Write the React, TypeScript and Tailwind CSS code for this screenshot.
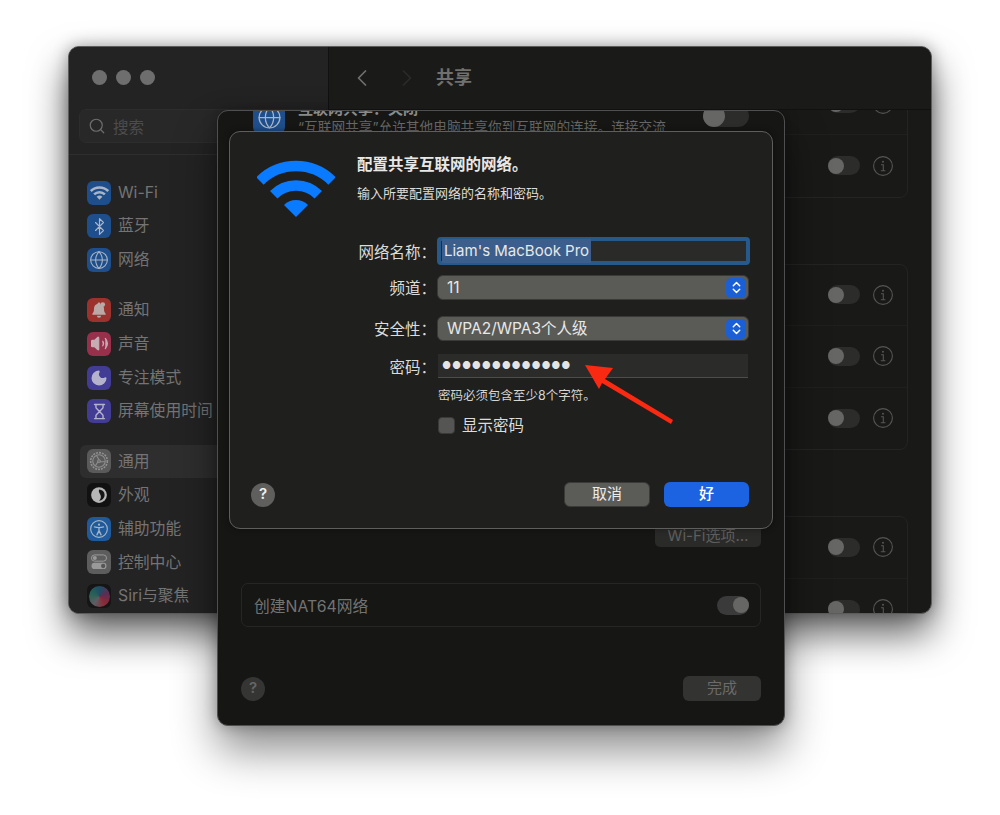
import { ReactNode } from "react";
import { Bluetooth, ChevronLeft, ChevronRight, Globe, Hourglass, Moon, Search, Volume2 } from "lucide-react";

const WifiMark = ({ className }: { className: string }) => (
  <svg viewBox="0 0 78 58" className={className} fill="none" stroke="currentColor">
    <path d="M2.94 20.94A51 51 0 0 1 75.06 20.94" strokeWidth="10.5" />
    <path d="M16.73 34.73A31.5 31.5 0 0 1 61.27 34.73" strokeWidth="10.5" />
    <path d="M39 57L27 45A17 17 0 0 1 51 45Z" fill="currentColor" stroke="none" />
  </svg>
);

const GearIcon = () => (
  <svg viewBox="0 0 24 24" className="h-[20px] w-[20px]" fill="none" stroke="#8f8f8f" strokeWidth="1.3">
    <circle cx="12" cy="12" r="10" strokeDasharray="2.4 1.2" strokeWidth="2" />
    <circle cx="12" cy="12" r="7.5" />
    <circle cx="12" cy="12" r="1.6" />
    <path d="M12 10.4L9 5.5M13.4 12.8L19 13M10.7 13L7.6 18" />
  </svg>
);

const AppearanceIcon = () => (
  <svg viewBox="0 0 24 24" className="h-[18px] w-[18px]">
    <circle cx="12" cy="12" r="10.5" fill="#b5b5b5" />
    <path d="M12 4.5a7.5 7.5 0 0 1 0 15c2.5-2 3-5 2-7.5s-3-4-2-7.5Z" fill="#151515" />
  </svg>
);

const AccessibilityIcon = () => (
  <svg viewBox="0 0 24 24" className="h-[20px] w-[20px]" fill="none" stroke="#a8b4c2" strokeWidth="1.4">
    <circle cx="12" cy="12" r="10" />
    <circle cx="12" cy="6.8" r="1.3" fill="#a8b4c2" stroke="none" />
    <path d="M6.5 9.5c3.5 1 7.5 1 11 0M12 10.5v3.5M12 14l-2.5 5M12 14l2.5 5" strokeLinecap="round" strokeWidth="1.6" />
  </svg>
);

const ControlIcon = () => (
  <svg viewBox="0 0 24 24" className="h-[20px] w-[20px]" fill="none">
    <rect x="3" y="3.5" width="18" height="7.5" rx="3.75" stroke="#999" strokeWidth="1.2" />
    <circle cx="7" cy="7.2" r="2.4" fill="#999" />
    <rect x="3" y="13" width="18" height="7.5" rx="3.75" fill="#999" />
    <circle cx="17" cy="16.8" r="2.6" fill="#555" />
  </svg>
);

const BellIcon = () => (
  <svg viewBox="0 0 24 24" className="h-[20px] w-[20px]" fill="#b9aaa8">
    <path d="M12 3c-1 0-1.6.7-1.7 1.5C7.5 5.3 6 7.6 6 10.5c0 3-.6 4.6-2 6v1.2h16v-1.2c-1.4-1.4-2-3-2-6 0-1-.2-2-.6-2.8C15 7.3 13.8 5.5 13.8 4.8 13.7 3.7 13 3 12 3Z" />
    <circle cx="16.5" cy="5.5" r="2.8" />
    <path d="M9.5 18.8a2.5 2.5 0 0 0 5 0Z" />
  </svg>
);

type SideItem = { label: string; color: string; icon: ReactNode; active?: boolean };

const sideGroups: SideItem[][] = [
  [
    { label: "Wi-Fi", color: "bg-[#1e4f8c]", icon: <WifiMark className="h-[14px] w-[19px] text-[#a9b5c4]" /> },
    { label: "蓝牙", color: "bg-[#1e4f8c]", icon: <Bluetooth size={19} color="#a9b5c4" strokeWidth={1.5} /> },
    { label: "网络", color: "bg-[#1e4f8c]", icon: <Globe size={20} color="#a9b5c4" strokeWidth={1.3} /> },
  ],
  [
    { label: "通知", color: "bg-[#9c322d]", icon: <BellIcon /> },
    { label: "声音", color: "bg-[#97304a]", icon: <Volume2 size={19} color="#c4adb3" fill="#c4adb3" strokeWidth={1.5} /> },
    { label: "专注模式", color: "bg-[#423c94]", icon: <Moon size={18} color="#b4b2cc" fill="#b4b2cc" /> },
    { label: "屏幕使用时间", color: "bg-[#423c94]", icon: <Hourglass size={17} color="#b4b2cc" strokeWidth={2} /> },
  ],
  [
    { label: "通用", color: "bg-[#5a5a5a]", icon: <GearIcon />, active: true },
    { label: "外观", color: "bg-[#111111]", icon: <AppearanceIcon /> },
    { label: "辅助功能", color: "bg-[#1f5a9c]", icon: <AccessibilityIcon /> },
    { label: "控制中心", color: "bg-[#5d5d5d]", icon: <ControlIcon /> },
    {
      label: "Siri与聚焦",
      color: "bg-[#151515]",
      icon: (
        <span className="h-[21px] w-[21px] rounded-full bg-[conic-gradient(#1e4d66,#5e2c52,#8a2a36,#5d5d62,#2a6155,#1e4d66)]" />
      ),
    },
  ],
];

const InfoIcon = () => (
  <svg viewBox="0 0 20 20" className="h-[20px] w-[20px]" fill="none" stroke="#555553" strokeWidth="1.1">
    <circle cx="10" cy="10" r="9.4" />
    <circle cx="10" cy="5.8" r="1" fill="#555553" stroke="none" />
    <path d="M8 8.8h2.3v6M7.8 14.8h4.6" />
  </svg>
);

const Toggle = ({ on = false, small = true }: { on?: boolean; small?: boolean }) => (
  <span
    className={`flex items-center rounded-full ${small ? "h-[19px] w-[32px]" : "h-[22px] w-[46px]"} ${on ? "justify-end bg-[#3a3a3a]" : "bg-[#2c2c2b]"}`}
  >
    <span className={`rounded-full bg-[#666665] ${small ? "h-[16px] w-[16px]" : "h-[22px] w-[22px]"}`} />
  </span>
);

const SettingRow = ({ last = false }: { last?: boolean }) => (
  <div className={`flex h-[61.5px] items-center justify-end gap-[13px] pr-[14px] ${last ? "" : "border-b border-[#1f1f1e]"}`}>
    <Toggle />
    <InfoIcon />
  </div>
);

const Stepper = () => (
  <span className="flex h-[20px] w-[20px] items-center justify-center rounded-[5px] bg-[#1b5fd6]">
    <svg viewBox="0 0 12 16" className="h-[15px] w-[11px]" fill="none" stroke="#fff" strokeWidth="1.6" strokeLinecap="round" strokeLinejoin="round">
      <path d="M2.5 6L6 2.5L9.5 6M2.5 10L6 13.5L9.5 10" />
    </svg>
  </span>
);

const SelectField = ({ value }: { value: string }) => (
  <div className="flex h-[25px] w-[312px] items-center justify-between rounded-[6px] border border-[#3a3a38] bg-[#5a5a56] pl-[9px] pr-[2px] text-[15.5px] text-[#e8e8e6]">
    <span className="pt-[1px]">{value}</span>
    <Stepper />
  </div>
);

const FormLabel = ({ children }: { children: string }) => (
  <span className="w-[79px] whitespace-nowrap pt-[3px] text-right text-[15.5px] text-[#dcdcda]">{children}</span>
);

const HelpButton = ({ className }: { className: string }) => (
  <span className={`flex h-[24px] w-[24px] items-center justify-center rounded-full text-[15px] font-semibold ${className}`}>?</span>
);

const BackWindow = () => (
  <div className="absolute left-[68px] top-[46px] flex h-[568px] w-[864px] overflow-hidden rounded-[11px] border border-[#5c5c5c] bg-[#191918] shadow-[0_20px_38px_rgba(0,0,0,0.62),0_0_16px_rgba(0,0,0,0.3)]">
    <aside className="flex w-[260px] shrink-0 flex-col border-r border-[#111111] bg-[#232323]">
      <div className="flex gap-[9px] pl-[23px] pt-[23px]">
        <span className="h-[15px] w-[15px] rounded-full bg-[#6e6e6e]" />
        <span className="h-[15px] w-[15px] rounded-full bg-[#6e6e6e]" />
        <span className="h-[15px] w-[15px] rounded-full bg-[#6e6e6e]" />
      </div>
      <div className="mx-[10px] mt-[24px] flex h-[34px] items-center gap-[7px] rounded-[7px] border border-[#2d2d2d] bg-[#282828] pl-[8px] text-[15.5px] text-[#4c4c4c]">
        <Search size={18} color="#6e6e6e" strokeWidth={1.6} />
        <span className="pt-[3px]">搜索</span>
      </div>
      <div className="mt-[11px] border-t border-[#2e2e2e]" />
      {sideGroups.map((group, i) => (
        <div key={i} className={i === 0 ? "mt-[21px]" : "mt-[16.5px]"}>
          {group.map((item) => (
            <div
              key={item.label}
              className={`mx-[11px] flex h-[33.7px] items-center gap-[7px] whitespace-nowrap rounded-[6px] pl-[7px] text-[15.8px] text-[#747474] ${item.active ? "bg-[#2e2e2e]" : ""}`}
            >
              <span className={`flex h-[24px] w-[24px] shrink-0 items-center justify-center overflow-hidden rounded-[6px] ${item.color}`}>
                {item.icon}
              </span>
              <span>{item.label}</span>
            </div>
          ))}
        </div>
      ))}
    </aside>
    <div className="flex min-w-0 flex-1 flex-col">
      <header className="z-10 flex h-[63px] shrink-0 items-center border-b border-[#111111] bg-[#1a1a19] pl-[19px] text-[#70706e]">
        <ChevronLeft size={28} strokeWidth={1.5} />
        <ChevronRight size={28} strokeWidth={1.5} color="#2b2b2a" className="ml-[17px]" />
        <span className="-mt-[2px] ml-[15px] text-[18px] font-bold">共享</span>
      </header>
      <div className="ml-[24px] mr-[23px] -mt-[37.5px] flex flex-col">
        <div className="rounded-[8px] border border-[#242423]">
          <SettingRow />
          <SettingRow last />
        </div>
        <div className="mt-[66px] rounded-[8px] border border-[#242423]">
          <SettingRow />
          <SettingRow />
          <SettingRow last />
        </div>
        <div className="mt-[66px] rounded-[8px] border border-[#242423]">
          <SettingRow />
          <SettingRow last />
        </div>
      </div>
    </div>
  </div>
);

const SheetWindow = () => (
  <div className="absolute left-[217px] top-[110px] flex h-[616px] w-[568px] flex-col overflow-hidden rounded-[11px] border border-[#4f4f4f] bg-[#161615] shadow-[0_24px_44px_rgba(0,0,0,0.45),0_0_14px_rgba(0,0,0,0.28)]">
    <div className="-mt-[10px] flex h-[33px] items-center gap-[13px] pl-[35px] pr-[35px]">
      <span className="flex h-[32px] w-[32px] shrink-0 items-center justify-center rounded-[7px] bg-[#1e4f8c]">
        <Globe size={25} color="#a9b5c4" strokeWidth={1.2} />
      </span>
      <div className="min-w-0 flex-1 whitespace-nowrap leading-[19px]">
        <div className="text-[15px] font-semibold text-[#8a8a88]">互联网共享：关闭</div>
        <div className="text-[13.7px] text-[#666664]">“互联网共享”允许其他电脑共享你到互联网的连接。连接交流</div>
      </div>
      <span className="-mt-[3px]">
        <Toggle small={false} />
      </span>
    </div>
    <div className="mt-[391px] flex justify-end pr-[23px]">
      <span className="flex h-[22px] w-[106px] items-center justify-center rounded-[5px] bg-[#2a2a29] pt-[1px] text-[15px] text-[#5f5f5d]">
        Wi-Fi选项…
      </span>
    </div>
    <div className="mx-[23px] mt-[36px] flex h-[44px] items-center justify-between rounded-[7px] border border-[#262625] pl-[12px] pr-[11px] text-[15.8px] text-[#737371]">
      <span className="pt-[3px]">创建NAT64网络</span>
      <Toggle on />
    </div>
    <div className="mt-auto flex items-center justify-between pb-[24px] pl-[23px] pr-[23px]">
      <HelpButton className="bg-[#353534] text-[#666664]" />
      <span className="flex h-[25px] w-[78px] items-center justify-center rounded-[6px] bg-[#333332] text-[15px] text-[#6b6b69]">完成</span>
    </div>
  </div>
);

const ConfigDialog = () => (
  <div className="absolute left-[229px] top-[131px] flex h-[398px] w-[544px] flex-col rounded-[11px] border border-[#5e5e5c] bg-[#1f1f1d] shadow-[0_0_6px_rgba(0,0,0,0.4)]">
    <div className="flex pl-[27px] pt-[28px]">
      <WifiMark className="h-[58px] w-[78px] text-[#0a7aff]" />
      <div className="ml-[22px]">
        <h1 className="-mt-[6px] text-[15.5px] font-bold leading-[22px] text-[#e8e8e6]">配置共享互联网的网络。</h1>
        <p className="mt-[7px] text-[13px] leading-[20px] text-[#dcdcda]">输入所要配置网络的名称和密码。</p>
      </div>
    </div>
    <div className="mt-[19px] flex flex-col pl-[127px]">
      <div className="flex h-[28px] items-center gap-[1px]">
        <FormLabel>网络名称：</FormLabel>
        <div className="flex h-[28px] w-[313px] items-center rounded-[4px] border-[4px] border-[#27598a] bg-[#2a2a29] pl-[1px] text-[15px] text-[#e8e8e6]">
          <span className="bg-[#3b5e8c] px-[2px] pt-[1px]">Liam's MacBook Pro</span>
        </div>
      </div>
      <div className="mt-[10px] flex h-[25px] items-center gap-[1px]">
        <FormLabel>频道：</FormLabel>
        <SelectField value="11" />
      </div>
      <div className="mt-[16px] flex h-[25px] items-center gap-[1px]">
        <FormLabel>安全性：</FormLabel>
        <SelectField value="WPA2/WPA3个人级" />
      </div>
      <div className="mt-[13px] flex h-[24px] items-center gap-[2px]">
        <FormLabel>密码：</FormLabel>
        <div className="flex h-[24px] w-[310px] items-center border-b border-[#4d4d4b] bg-[#2b2b2a] pl-[4px] text-[10px] tracking-[0.8px] text-[#e4e4e2]">
          ●●●●●●●●●●●●●
        </div>
      </div>
      <p className="ml-[81px] mt-[9px] text-[12.5px] leading-[18px] text-[#d4d4d2]">密码必须包含至少8个字符。</p>
      <label className="ml-[81px] mt-[9px] flex items-center gap-[7px] text-[15.5px] text-[#dcdcda]">
        <span className="h-[17px] w-[17px] rounded-[4px] border border-[#3a3a38] bg-[#555553]" />
        显示密码
      </label>
    </div>
    <div className="mt-auto flex items-center pb-[21px] pl-[21px] pr-[23px]">
      <HelpButton className="bg-[#5f5f5d] text-[#f0f0ee]" />
      <span className="ml-auto flex h-[25px] w-[86px] items-center justify-center rounded-[6px] border border-[#3a3a38] bg-[#5b5b58] text-[15px] text-[#ececea]">取消</span>
      <span className="ml-[14px] flex h-[25px] w-[85px] items-center justify-center rounded-[6px] bg-[#1b63e0] text-[15px] font-medium text-white">好</span>
    </div>
  </div>
);

const RedArrow = () => (
  <svg viewBox="0 0 100 70" className="absolute left-[580px] top-[360px] h-[70px] w-[100px]" fill="#fa2a12">
    <path d="M5 5L33 8L25 19L93 60L91 64L22 23L19 29Z" />
  </svg>
);

export default function App() {
  return (
    <div className="relative h-[815px] w-[1000px] overflow-hidden bg-white font-[Inter,'Noto_Sans_CJK_SC',sans-serif]">
      <BackWindow />
      <SheetWindow />
      <ConfigDialog />
      <RedArrow />
    </div>
  );
}
